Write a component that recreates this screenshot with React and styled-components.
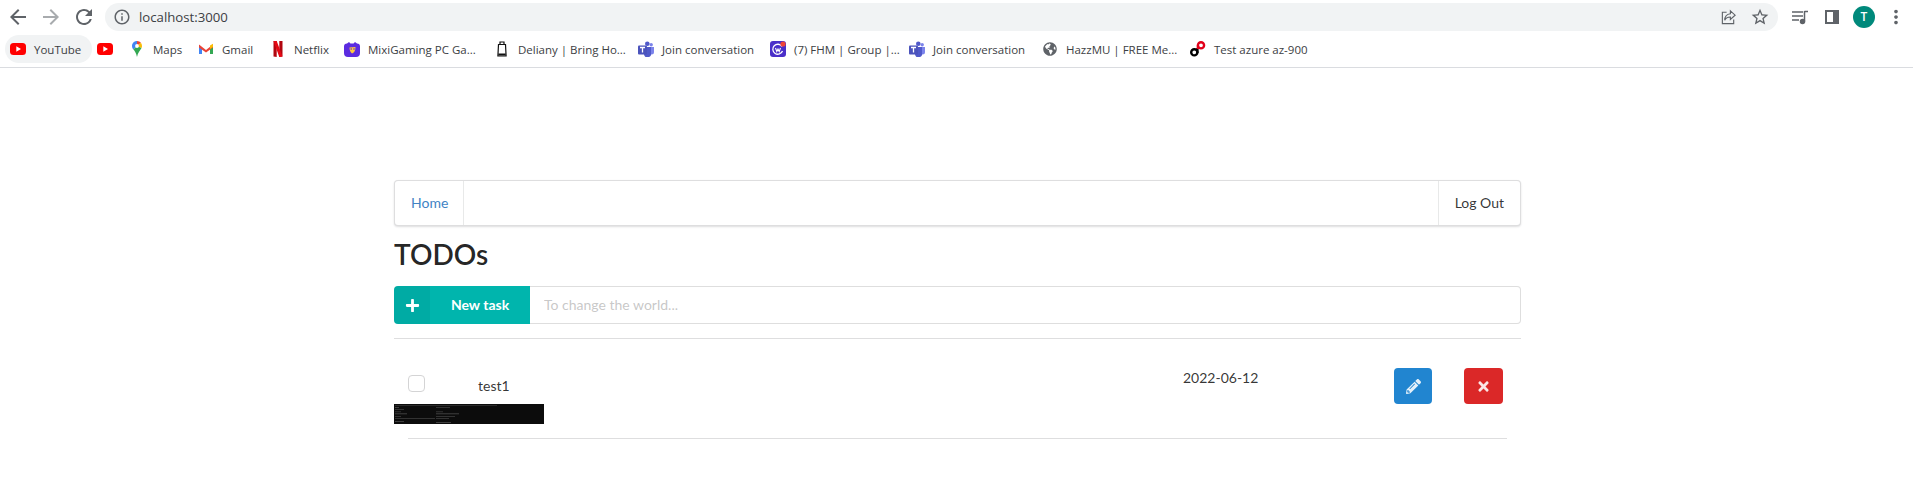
import React from 'react';
import styled, { createGlobalStyle } from 'styled-components';
import { MdArrowBack, MdArrowForward, MdRefresh, MdInfoOutline, MdStarBorder, MdMoreVert } from 'react-icons/md';
import { FaPlus, FaPencilAlt, FaTimes, FaGlobeAmericas } from 'react-icons/fa';

const GlobalStyle = createGlobalStyle`
  html, body {
    margin: 0;
    padding: 0;
    background: #fff;
    font-family: Lato, "Helvetica Neue", Arial, sans-serif;
    font-size: 14px;
    color: rgba(0, 0, 0, 0.8);
  }
  * {
    box-sizing: border-box;
  }
`;

const BrowserChrome = styled.header`
  height: 68px;
  background: #fff;
  border-bottom: 1px solid #dadce0;
  font-family: "Open Sans", Arial, sans-serif;
`;

const AddressRow = styled.div`
  height: 34px;
  display: flex;
  align-items: center;
  padding: 0 1px;
`;

const NavButton = styled.span`
  width: 33px;
  display: flex;
  justify-content: center;
  color: ${props => (props.$disabled ? '#a8abae' : '#5f6368')};
  font-size: 24px;
  line-height: 0;
`;

const AddressBar = styled.div`
  flex: 1;
  height: 28px;
  margin-left: 5px;
  padding: 0 2px 0 8px;
  display: flex;
  align-items: center;
  background: #f1f3f4;
  border-radius: 14px;
  color: #3c4043;
  font-size: 13.2px;
`;

const UrlText = styled.span`
  flex: 1;
  margin-left: 8px;
`;

const BarIcon = styled.span`
  width: 32px;
  display: flex;
  justify-content: center;
  color: #5f6368;
  font-size: 20px;
  line-height: 0;
`;

const ToolIcons = styled.div`
  display: flex;
  align-items: center;
  margin-left: 6px;
`;

const ToolIcon = styled.span`
  width: 32px;
  display: flex;
  justify-content: center;
  color: #5f6368;
  line-height: 0;
`;

const Avatar = styled.span`
  width: 22px;
  height: 22px;
  border-radius: 50%;
  background: #00897b;
  color: #fff;
  font-size: 12px;
  line-height: 22px;
  font-weight: 600;
  text-align: center;
`;

const BookmarkBar = styled.nav`
  height: 33px;
  padding: 0 0 3px 5px;
  display: flex;
  align-items: center;
`;

const Bookmark = styled.span`
  flex: 0 0 ${props => props.$width}px;
  height: 28px;
  padding-left: 5px;
  display: flex;
  align-items: center;
  gap: 8px;
  border-radius: 14px;
  background: ${props => (props.$active ? '#f1f3f4' : 'transparent')};
  color: #3c4043;
  font-size: 11.5px;
  white-space: nowrap;
`;

const Favicon = styled.svg`
  flex: none;
  width: 16px;
  height: 16px;
`;

const GlobeGlyph = styled(FaGlobeAmericas)`
  flex: none;
  width: 14px;
  height: 14px;
  margin: 0 1px;
  color: #5f6368;
`;

const Page = styled.main`
  width: 1127px;
  margin-left: 394px;
  padding-top: 112px;
`;

const Menu = styled.div`
  height: 46px;
  display: flex;
  justify-content: space-between;
  background: #fff;
  border: 1px solid rgba(34, 36, 38, 0.15);
  border-radius: 4px;
  box-shadow: 0 1px 2px 0 rgba(34, 36, 38, 0.15);
`;

const MenuItem = styled.a`
  display: flex;
  align-items: center;
  padding: 0 ${props => (props.$link ? 15 : 16)}px 2px 16px;
  color: ${props => (props.$link ? '#4183c4' : 'rgba(0, 0, 0, 0.8)')};
  border-left: ${props => (props.$right ? '1px solid rgba(34, 36, 38, 0.1)' : 'none')};
  border-right: ${props => (props.$right ? 'none' : '1px solid rgba(34, 36, 38, 0.1)')};
`;

const Title = styled.h1`
  margin: 8px 0 0;
  height: 52px;
  font-size: 28px;
  line-height: 40px;
  font-weight: 600;
  color: rgba(0, 0, 0, 0.87);
`;

const NewTaskForm = styled.form`
  height: 38px;
  margin: 0;
  display: flex;
`;

const LabeledButton = styled.button`
  flex: 0 0 136px;
  padding: 0;
  display: flex;
  align-items: stretch;
  border: 0;
  border-radius: 4px 0 0 4px;
  background: #00b5ad;
  color: #fff;
  font-family: Lato, sans-serif;
  font-size: 14px;
  font-weight: 700;
`;

const ButtonIcon = styled.span`
  width: 36px;
  display: flex;
  align-items: center;
  justify-content: center;
  background: rgba(0, 0, 0, 0.05);
  border-radius: 4px 0 0 4px;
  font-size: 15px;
`;

const ButtonLabel = styled.span`
  flex: 1;
  align-self: center;
  padding-bottom: 2px;
  text-align: center;
`;

const TaskInput = styled.input`
  flex: 1;
  padding: 0 14px 1px;
  border: 1px solid rgba(34, 36, 38, 0.15);
  border-left: 0;
  border-radius: 0 4px 4px 0;
  font-family: Lato, sans-serif;
  font-size: 14px;
  outline: none;

  &::placeholder {
    color: rgba(191, 191, 191, 0.87);
  }
`;

const Rule = styled.hr`
  margin: 14px 0 0;
  border: 0;
  border-top: 1px solid rgba(34, 36, 38, 0.15);
`;

const TaskRow = styled.div`
  display: grid;
  grid-template-columns: 70px 705px 211px 70px 39px;
  margin-top: 29px;
  padding-left: 14px;
  height: 36px;
`;

const CheckBox = styled.span`
  width: 17px;
  height: 17px;
  margin-top: 7px;
  background: #fff;
  border: 1px solid #d4d4d5;
  border-radius: 4px;
`;

const TaskName = styled.span`
  margin-top: 8px;
  line-height: 20px;
`;

const TaskDate = styled.span`
  line-height: 20px;
`;

const IconButton = styled.button`
  width: ${props => props.$width}px;
  height: 36px;
  padding: 0;
  display: flex;
  align-items: center;
  justify-content: center;
  border: 0;
  border-radius: 4px;
  background: ${props => props.$color};
  color: rgba(255, 255, 255, 0.88);
  font-size: 15px;
`;

const Thumbnail = styled.svg`
  display: block;
  width: 150px;
  height: 20px;
`;

const RowDivider = styled.hr`
  margin: 14px 14px 0;
  border: 0;
  border-top: 1px solid rgba(34, 36, 38, 0.15);
`;

// favicons are drawn by hand, the bookmark bar only needs the rough shapes
const YouTubeIcon = () => (
  <Favicon viewBox="0 0 16 16">
    <rect y="2" width="16" height="12" rx="3.5" fill="#f00" />
    <path d="M6.3 5.2 11 8l-4.7 2.8z" fill="#fff" />
  </Favicon>
);

const MapsIcon = () => (
  <Favicon viewBox="0 0 16 16">
    <path d="M8 0C5 0 3 2.300 3 5c0 1.500.6 2.500 1.400 3.500L8 5z" fill="#4285f4" />
    <path d="M8 0c1.600 0 3 .7 3.900 1.800L8 5z" fill="#ea4335" />
    <path d="M11.900 1.800C12.600 2.700 13 3.800 13 5c0 .8-.2 1.500-.5 2.100L8 5z" fill="#fbbc04" />
    <path d="M4.400 8.500C5.800 10.300 7.300 12 8 16c.7-4 3-6.200 4.500-8.900L8 5z" fill="#34a853" />
    <circle cx="8" cy="5" r="1.900" fill="#fff" />
  </Favicon>
);

const GmailIcon = () => (
  <Favicon viewBox="0 0 16 16">
    <path d="M1 4v9h3V7z" fill="#4285f4" />
    <path d="M15 4v9h-3V7z" fill="#34a853" />
    <path d="M1 3.500 8 9l7-5.500V6.500L8 11.500 1 6.500z" fill="#ea4335" />
    <path d="M12 4.500 15 2.700V6l-3 2z" fill="#fbbc04" />
  </Favicon>
);

const NetflixIcon = () => (
  <Favicon viewBox="0 0 16 16">
    <path d="M3.500 0h3.200v16l-3.200-.4z" fill="#b1060f" />
    <path d="M9.300 0h3.200v15.600l-3.200.4z" fill="#b1060f" />
    <path d="M3.500 0h3.200l5.800 15.600L9.300 16z" fill="#e50914" />
  </Favicon>
);

const MixiIcon = () => (
  <Favicon viewBox="0 0 16 16">
    <path d="M3 2.500 5 1l1.500 1.500h3L11 1l2 1.500a3 3 0 0 1 3 3V12a4 4 0 0 1-4 4H4a4 4 0 0 1-4-4V5.500a3 3 0 0 1 3-3z" fill="#5b2be0" />
    <path d="M5.500 6.500 11.500 6c0 3.500-1.500 6-3.500 6.500-1.500-1-2.500-3-2.500-6z" fill="#ffc83d" />
    <circle cx="7.200" cy="8" r=".8" fill="#5b2be0" />
    <circle cx="10" cy="8" r=".8" fill="#5b2be0" />
  </Favicon>
);

const DelianyIcon = () => (
  <Favicon viewBox="0 0 16 16">
    <path d="M6 3V1h4v2" fill="none" stroke="#111" strokeWidth="1.200" />
    <path d="M4.500 3.500h7l.6 11.500H3.900z" fill="#fff" stroke="#111" strokeWidth="1.200" />
    <path d="M4.300 13.500h7.400" stroke="#111" strokeWidth="2" />
  </Favicon>
);

const TeamsIcon = () => (
  <Favicon viewBox="0 0 16 16">
    <circle cx="13.200" cy="3.800" r="1.700" fill="#7b83eb" />
    <circle cx="9.300" cy="2.800" r="2.300" fill="#5059c9" />
    <path d="M11 6h5v5a2.500 2.500 0 0 1-5 0z" fill="#7b83eb" />
    <path d="M5 6h8v6a3.500 3.500 0 0 1-7 1.500z" fill="#5059c9" />
    <rect y="4.500" width="9" height="9" rx="1" fill="#4b53bc" />
    <path d="M2 6.500h5M4.500 6.500v5" stroke="#fff" strokeWidth="1.300" />
  </Favicon>
);

const FhmIcon = () => (
  <Favicon viewBox="0 0 16 16">
    <rect width="16" height="16" rx="3" fill="#4a2fc9" />
    <path d="M12 5.500A5 5 0 1 0 12.500 10" fill="none" stroke="#fff" strokeWidth="1.300" />
    <path d="M5.500 7l1.300 3.500L8 8l1.200 2.500L10.500 7" fill="none" stroke="#fff" strokeWidth="1.100" />
    <circle cx="13" cy="3" r="2.600" fill="#f04438" />
  </Favicon>
);

const TestIcon = () => (
  <Favicon viewBox="0 0 16 16">
    <circle cx="4.300" cy="11.300" r="3.100" fill="none" stroke="#000" strokeWidth="2.400" />
    <path d="M7.400 12V7" stroke="#000" strokeWidth="2.400" />
    <circle cx="11" cy="4.300" r="3.100" fill="none" stroke="#e2001a" strokeWidth="2.400" />
    <path d="M7.900 4.500V8" stroke="#e2001a" strokeWidth="2.400" />
  </Favicon>
);

const bookmarks = [
  { icon: YouTubeIcon, label: 'YouTube', width: 87, active: true },
  { icon: YouTubeIcon, label: '', width: 32 },
  { icon: MapsIcon, label: 'Maps', width: 69 },
  { icon: GmailIcon, label: 'Gmail', width: 72 },
  { icon: NetflixIcon, label: 'Netflix', width: 74 },
  { icon: MixiIcon, label: 'MixiGaming PC Ga...', width: 150 },
  { icon: DelianyIcon, label: 'Deliany | Bring Ho...', width: 144 },
  { icon: TeamsIcon, label: 'Join conversation', width: 132 },
  { icon: FhmIcon, label: '(7) FHM | Group |...', width: 139 },
  { icon: TeamsIcon, label: 'Join conversation', width: 133 },
  { icon: GlobeGlyph, label: 'HazzMU | FREE Me...', width: 148 },
  { icon: TestIcon, label: 'Test azure az-900', width: 130 },
];

const ShareIcon = () => (
  <svg width="17" height="17" viewBox="0 0 18 18" fill="none" stroke="currentColor" strokeWidth="1.200">
    <path d="M7 3.500H2.500v12h12V11" />
    <path d="M11 2l5 4.500L11 11V8.500C8 8.500 6 9.500 5 12c0-4 2-6.500 6-7z" />
  </svg>
);

const MediaIcon = () => (
  <svg width="18" height="18" viewBox="0 0 18 18" fill="none" stroke="currentColor" strokeWidth="1.500">
    <path d="M1 4h11M1 8h11M1 12h7" />
    <path d="M13.500 3v10.500" />
    <path d="M13.500 3.500H17" />
    <circle cx="11.500" cy="13.500" r="2" fill="currentColor" />
  </svg>
);

const PanelIcon = () => (
  <svg width="18" height="18" viewBox="0 0 18 18">
    <path d="M2 2h14v14H2zM4 4v10h6V4z" fill="currentColor" fillRule="evenodd" />
  </svg>
);

// the attached picture is a screenshot of a dark terminal
const TerminalShot = () => (
  <Thumbnail viewBox="0 0 150 20">
    <rect width="150" height="20" fill="#0c0c0c" />
    <rect x="1" y="1" width="102" height="0.7" fill="#3a3a3a" />
    <rect x="1" y="3" width="4" height="0.7" fill="#555" />
    <rect x="42" y="3" width="14" height="0.7" fill="#444" />
    <rect x="1" y="5" width="9" height="0.7" fill="#444" />
    <rect x="1" y="7.500" width="6" height="0.7" fill="#444" />
    <rect x="42" y="7.500" width="7" height="0.7" fill="#444" />
    <rect x="1" y="9.500" width="12" height="0.7" fill="#555" />
    <rect x="42" y="9.500" width="23" height="0.7" fill="#555" />
    <rect x="1" y="12" width="6" height="0.7" fill="#444" />
    <rect x="42" y="12" width="19" height="0.7" fill="#444" />
    <rect x="1" y="14" width="40" height="0.7" fill="#444" />
    <rect x="42" y="14" width="13" height="0.7" fill="#444" />
    <rect x="1" y="17" width="9" height="0.7" fill="#555" />
    <rect x="42" y="18" width="15" height="0.7" fill="#555" />
  </Thumbnail>
);

const App = () => (
  <>
    <GlobalStyle />
    <BrowserChrome>
      <AddressRow>
        <NavButton><MdArrowBack /></NavButton>
        <NavButton $disabled><MdArrowForward /></NavButton>
        <NavButton><MdRefresh /></NavButton>
        <AddressBar>
          <MdInfoOutline size={18} color="#5f6368" />
          <UrlText>localhost:3000</UrlText>
          <BarIcon><ShareIcon /></BarIcon>
          <BarIcon><MdStarBorder /></BarIcon>
        </AddressBar>
        <ToolIcons>
          <ToolIcon><MediaIcon /></ToolIcon>
          <ToolIcon><PanelIcon /></ToolIcon>
          <ToolIcon><Avatar>T</Avatar></ToolIcon>
          <ToolIcon><MdMoreVert size={22} /></ToolIcon>
        </ToolIcons>
      </AddressRow>
      <BookmarkBar>
        {bookmarks.map(({ icon: Icon, label, width, active }, i) => (
          <Bookmark key={i} $width={width} $active={active}>
            <Icon />
            {label && <span>{label}</span>}
          </Bookmark>
        ))}
      </BookmarkBar>
    </BrowserChrome>
    <Page>
      <Menu>
        <MenuItem $link>Home</MenuItem>
        <MenuItem $right>Log Out</MenuItem>
      </Menu>
      <Title>TODOs</Title>
      <NewTaskForm>
        <LabeledButton type="button">
          <ButtonIcon><FaPlus /></ButtonIcon>
          <ButtonLabel>New task</ButtonLabel>
        </LabeledButton>
        <TaskInput placeholder="To change the world..." />
      </NewTaskForm>
      <Rule />
      <TaskRow>
        <CheckBox />
        <TaskName>test1</TaskName>
        <TaskDate>2022-06-12</TaskDate>
        <IconButton type="button" $color="#2185d0" $width={38}><FaPencilAlt /></IconButton>
        <IconButton type="button" $color="#db2828" $width={39}><FaTimes /></IconButton>
      </TaskRow>
      <TerminalShot />
      <RowDivider />
    </Page>
  </>
);

export default App;
